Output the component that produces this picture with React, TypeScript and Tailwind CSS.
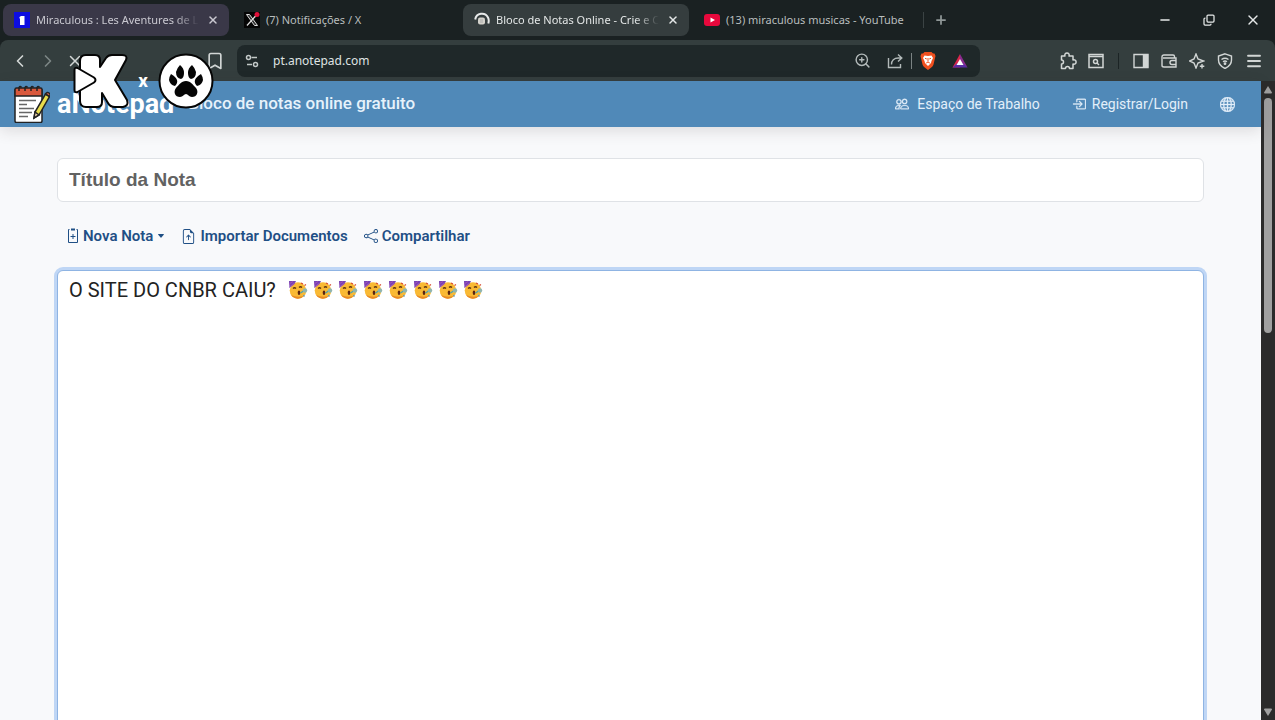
import React, { useState } from 'react';
import {
    BsPeople,
    BsBoxArrowInRight,
    BsGlobe,
    BsFileEarmarkArrowUp,
    BsShare,
    BsCaretDownFill,
} from 'react-icons/bs';
import {
    Bookmark,
    ChevronLeft,
    ChevronRight,
    Copy,
    Menu,
    Minus,
    Plus,
    X,
    ZoomIn,
} from 'lucide-react';

interface Tab {
    title: string;
    icon: React.ReactNode;
    className: string;
    closable: boolean;
}

const MiraculousIcon = () => (
    <svg viewBox="0 0 16 16" className="size-4 shrink-0">
        <rect width="16" height="16" fill="#0d0de0" />
        <path d="M5.500 5 7 4h3.500v9H6V6.500h-.5z" fill="#fff" />
    </svg>
);

const XIcon = () => (
    <svg viewBox="0 0 16 16" className="size-4 shrink-0">
        <rect width="16" height="16" fill="#050505" />
        <path d="M2.500 2.500h3l8 11h-3z" fill="#333" stroke="#ddd" />
        <path d="M12.500 3 3 13.500" stroke="#ddd" strokeWidth="1.300" />
        <circle cx="13" cy="2.500" r="2.500" fill="#e0103a" />
    </svg>
);

const LoadingIcon = () => (
    <svg viewBox="0 0 16 16" className="size-4 shrink-0">
        <path d="M1.200 7.500a6.800 6.800 0 0 1 12.800-2q1.300 2.500.3 6" fill="none" stroke="#e8eaea" strokeWidth="2" />
        <rect x="4" y="5.500" width="7" height="7" rx="2" fill="#d3d1cb" />
        <path d="M6 8h3M6 10h3" stroke="#aaa" />
    </svg>
);

const YoutubeIcon = () => (
    <svg viewBox="0 0 16 16" className="size-4 shrink-0">
        <rect y="2" width="16" height="12" rx="3" fill="#e8083c" />
        <path d="m6.500 5.500 4.500 2.500-4.500 2.500z" fill="#fff" />
    </svg>
);

const tabs: Tab[] = [
    { title: 'Miraculous : Les Aventures de La', icon: <MiraculousIcon />, className: 'bg-[#3a3848] text-[#c9c8d0]', closable: true },
    { title: '(7) Notificações / X', icon: <XIcon />, className: 'text-[#b9bebe]', closable: false },
    { title: 'Bloco de Notas Online - Crie e Co', icon: <LoadingIcon />, className: 'bg-[#353d3e] text-[#e4e7e7]', closable: true },
    { title: '(13) miraculous musicas - YouTube', icon: <YoutubeIcon />, className: 'text-[#b9bebe]', closable: false },
];

const TabStrip: React.FC = () => (
    <div className="flex h-10 shrink-0 items-center bg-[#1a2122] pl-[3px] font-['Noto_Sans',sans-serif] text-[11px]">
        <div className="flex min-w-0 flex-1 items-center gap-1">
            {tabs.map(tab => (
                <div key={tab.title} className={`flex h-8 w-[226px] min-w-0 items-center gap-1.5 rounded-lg pr-2 pl-[11px] ${tab.className}`}>
                    {tab.icon}
                    <button
                        className={`min-w-0 flex-1 text-left whitespace-nowrap ${
                            tab.closable ? '[mask-image:linear-gradient(to_right,black_85%,transparent)]' : ''
                        }`}
                    >
                        {tab.title}
                    </button>
                    {tab.closable && (
                        <button aria-label="Fechar guia" className="flex size-4 items-center justify-center">
                            <X size={12} strokeWidth={3} />
                        </button>
                    )}
                </div>
            ))}
            <div className="h-4 w-px bg-[#3b4344]" />
            <button aria-label="Nova guia" className="ml-1.5 text-[#8f9797]">
                <Plus size={14} strokeWidth={3} />
            </button>
        </div>
        <div className="flex items-center text-[#e6e9e9]">
            <button aria-label="Minimizar" className="flex w-11 justify-center"><Minus size={14} strokeWidth={2.5} /></button>
            <button aria-label="Restaurar" className="flex w-11 justify-center"><Copy size={12} strokeWidth={2.5} className="-scale-x-100 rotate-180" /></button>
            <button aria-label="Fechar" className="flex w-11 justify-center"><X size={16} strokeWidth={2} /></button>
        </div>
    </div>
);

const SiteSettingsIcon = () => (
    <svg viewBox="0 0 14 14" className="size-3.5 shrink-0" fill="none" stroke="#c3c9c8" strokeWidth="1.500">
        <circle cx="3.500" cy="3.500" r="2" />
        <path d="M6.500 3.500H12M2 10.500h5" />
        <circle cx="10.500" cy="10.500" r="2" />
    </svg>
);

const ShareOutIcon = () => (
    <svg viewBox="0 0 16 16" className="size-4" fill="none" stroke="currentColor" strokeWidth="1.400">
        <path d="M1.500 5v9.500h12V11" />
        <path d="M4.500 11.500c0-4 2.500-6.500 7-6.500h3M11 1.500 14.800 5 11 8.500" />
    </svg>
);

const BraveIcon = () => (
    <svg viewBox="0 0 16 18" className="h-[18px] w-4">
        <path d="M4.500 0h7l1.500 1.500h1.500L15.500 4 15 6l-1.500 6.500q-.5 2-2.500 3.300L8 18l-3-2.200q-2-1.300-2.500-3.300L1 6 .5 4l1-2.500H3z" fill="#f1501f" />
        <path d="M4.500 3.500 8 4l3.500-.5L13 6l-1.500 3-.5 2-3 3-3-3-.5-2L3 6z" fill="#fff" />
        <path d="m5 6.300 1.800.7M11 6.300 9.200 7M8 6v3.500M6.200 11 8 10l1.800 1" stroke="#f1501f" fill="none" />
    </svg>
);

const BatIcon = () => (
    <svg viewBox="0 0 16 16" className="size-4">
        <path d="M8 1 .5 14.500H8z" fill="#d9264c" />
        <path d="m8 1 7.500 13.500L8 9z" fill="#8b2a8e" />
        <path d="M.5 14.500h15L11 10.500H5z" fill="#5b2da6" />
        <path d="m8 6 3.500 6h-7z" fill="#fff" />
    </svg>
);

const toolbarIcons: { label: string; icon: React.ReactNode }[] = [
    {
        label: 'Barra lateral',
        icon: (
            <>
                <path d="M1 1.500h14v13H1z" />
                <path d="M10.500 2h4v12h-4z" fill="currentColor" />
            </>
        ),
    },
    {
        label: 'Carteira',
        icon: (
            <>
                <path d="M13.500 5V3.500q0-1.500-1.500-1.500H3Q1 2 1 4v8.500Q1 14 3 14h12V5H2" />
                <path d="M15 7.500h-4a2 2 0 0 0 0 4h4" />
            </>
        ),
    },
    {
        label: 'Leo IA',
        icon: (
            <>
                <path d="M7 1 9 6l5.500 2L9 10l-2 5-2-5-4.500-2L5 6z" />
                <path d="M13 11v4.500M10.800 13.200h4.500" />
            </>
        ),
    },
    {
        label: 'VPN',
        icon: (
            <>
                <path d="M8 .8 14.500 3v4q0 5.500-6.500 8.500Q1.500 12.500 1.500 7V3z" />
                <path d="M4.500 6.500q3.500-2.500 7 0M6 8.700q2-1.400 4 0" />
                <circle cx="8" cy="10.700" r=".7" fill="currentColor" />
            </>
        ),
    },
];

const Toolbar: React.FC = () => (
    <div className="shrink-0 bg-[#1a2122]">
        <div className="flex h-[41px] items-center rounded-t-lg bg-[#343e3e] pr-3 pl-2.5 text-[#d2d6d5]">
            <div className="flex w-[227px] items-center gap-2">
                <button aria-label="Voltar"><ChevronLeft size={20} strokeWidth={2} /></button>
                <button aria-label="Avançar" className="text-[#7c8685]"><ChevronRight size={20} strokeWidth={2} /></button>
                <button aria-label="Parar"><X size={18} strokeWidth={2} /></button>
                <button aria-label="Adicionar aos favoritos" className="mr-3 ml-auto"><Bookmark size={20} strokeWidth={2} /></button>
            </div>
            <div className="flex h-8 min-w-0 flex-1 items-center rounded-lg bg-[#1f2829] pr-3 pl-2">
                <SiteSettingsIcon />
                <input
                    aria-label="Endereço"
                    defaultValue="pt.anotepad.com"
                    className="ml-3.5 min-w-0 flex-1 bg-transparent font-['Noto_Sans',sans-serif] text-[12px] text-[#dfe3e3] outline-none"
                />
                <button aria-label="Zoom" className="mr-4 text-[#b3baba]"><ZoomIn size={17} strokeWidth={2} /></button>
                <button aria-label="Compartilhar página" className="text-[#b3baba]"><ShareOutIcon /></button>
                <div className="mx-2 h-4 w-px bg-[#7b8383]" />
                <button aria-label="Brave Shields" className="mr-4"><BraveIcon /></button>
                <button aria-label="Brave Rewards"><BatIcon /></button>
            </div>
            <div className="ml-20 flex items-center gap-3">
                <button aria-label="Extensões">
                    <svg viewBox="0 0 16 16" className="size-4 overflow-visible" fill="none" stroke="currentColor" strokeWidth="1.500" strokeLinejoin="round">
                        <path d="M1.500 3H5a2.200 2.200 0 1 1 4 0h4v4a2.200 2.200 0 1 1 0 4v4.500H9.500a2 2 0 0 0-4 0h-4V11a2 2 0 0 0 0-4z" />
                    </svg>
                </button>
                <button aria-label="Pesquisar guias">
                    <svg viewBox="0 0 16 16" className="size-4" fill="none" stroke="currentColor" strokeWidth="1.500">
                        <path d="M1 1.500h14v13H1zM1 3.500h14" />
                        <circle cx="7.500" cy="8.500" r="2" />
                        <path d="m9 10 2 2" />
                    </svg>
                </button>
                <div className="mx-0.5 h-4 w-px bg-[#1c2425]" />
                {toolbarIcons.map(item => (
                    <button key={item.label} aria-label={item.label}>
                        <svg viewBox="0 0 16 16" className="size-4" fill="none" stroke="currentColor" strokeWidth="1.400">
                            {item.icon}
                        </svg>
                    </button>
                ))}
                <button aria-label="Menu"><Menu size={18} strokeWidth={2.5} /></button>
            </div>
        </div>
    </div>
);

const NotepadLogo = () => (
    <svg viewBox="0 0 36 38" className="h-[38px] w-9 shrink-0" stroke="#222" strokeWidth="1.500">
        <path d="M1 5h27v31q0 1.500-1.500 1.500h-24Q1 37.500 1 36z" fill="#fff" />
        <path d="M1 4.500q0-1.500 1.500-1.500h24Q28 3 28 4.500V11H1z" fill="#d9583c" />
        <path d="M5 6V2.500q1-2 2.500 0M11 6V2.500q1-2 2.500 0M17 6V2.500q1-2 2.500 0M23 6V2.500q1-2 2.500 0" fill="none" />
        <path d="M5 15.500h17M5 19.500h8M5 23.500h15M5 27.500h13M5 31.500h9" fill="none" stroke="#666" />
        <path d="m20 33 1-6L31.500 9l4 2.500L25 30z" fill="#e8dc4c" />
        <path d="M31.500 9q1.500-2.500 3.500-1t.5 3.500z" fill="#e06a50" />
        <path d="m20 33 1-6 4 3z" fill="#f5d9b0" />
    </svg>
);

const SiteHeader: React.FC = () => (
    <header className="relative z-10 flex h-[46px] shrink-0 items-center bg-[#5089b8] pr-[26px] pl-3.5 font-['Roboto',sans-serif] text-white shadow-[0_4px_14px_rgba(60,40,40,0.14)]">
        <NotepadLogo />
        <a href="#" className="ml-[7px] flex items-center whitespace-nowrap">
            <span className="text-[27px] leading-[30px] font-bold">aNotepad</span>
            <span className="ml-1 text-[17px] font-medium text-[#e6f2fb]">- Bloco de notas online gratuito</span>
        </a>
        <nav className="ml-auto flex items-center text-[14px] text-[#e3effa]">
            <a href="#" className="flex items-center gap-2"><BsPeople size={14} strokeWidth={0.4} />Espaço de Trabalho</a>
            <a href="#" className="ml-8 flex items-center gap-1.5"><BsBoxArrowInRight size={14} strokeWidth={0.4} />Registrar/Login</a>
            <button aria-label="Idioma" className="ml-8"><BsGlobe size={15} strokeWidth={0.4} /></button>
        </nav>
    </header>
);

const NewNoteIcon = () => (
    <svg viewBox="0 0 12 16" className="h-4 w-3" fill="none" stroke="currentColor">
        <path d="M2.500 1.500h-1v13h9v-13h-1" />
        <path d="M4 1.500h4" strokeWidth="2" />
        <path d="M6 6v5M3.500 8.500h5" />
    </svg>
);

const PartyFace = () => (
    <svg viewBox="0 0 20 20" className="size-5">
        <circle cx="10" cy="10.500" r="8.300" fill="#f9b934" />
        <path d="M3 15a8.300 8.300 0 0 0 13 1q-7 2-13-1z" fill="#e88a26" />
        <path d="M1 1h7l-1.500 3L1.500 8z" fill="#7544b5" />
        <path d="m1 4 4-2.500M1.500 7 6.500 3" stroke="#a552b8" />
        <path d="M5 8.500q1.500-1.500 3 0M11 7.500q1.500-1.500 3 0" fill="none" stroke="#5b3413" strokeWidth="1.300" />
        <ellipse cx="11" cy="12.800" rx="1.300" ry="2.200" fill="#5b2410" />
        <path d="m12.500 13 3-2" stroke="#45a2b5" strokeWidth="1.300" />
        <circle cx="17" cy="10.500" r="2.200" fill="#8fb5b0" />
        <path d="m15.500 15 1 1.500" stroke="#4e94c9" strokeWidth="1.300" />
        <path d="m13 3 2 1M16.500 5.500l1.500-1" stroke="#d6472e" strokeWidth="1.200" />
    </svg>
);

const Editor: React.FC = () => {
    const [title, setTitle] = useState('');
    const [text, setText] = useState('O SITE DO CNBR CAIU?');

    return (
        <main className="min-h-0 flex-1 overflow-hidden bg-[#f8f9fb] px-[57px] pt-[31px]">
            <input
                aria-label="Título da Nota"
                placeholder="Título da Nota"
                value={title}
                onChange={e => setTitle(e.target.value)}
                className="h-11 w-full rounded-md border border-[#dfe2e6] bg-white px-[11px] font-['Liberation_Sans',sans-serif] text-[19px] font-bold outline-none placeholder:text-[#626262]"
            />
            <div className="flex h-[68px] items-center gap-4 pl-2.5 font-['Roboto',sans-serif] text-[15px] font-semibold text-[#1f4f85]">
                <button className="flex items-center gap-1"><NewNoteIcon />Nova Nota<BsCaretDownFill size={8} /></button>
                <button className="flex items-center gap-1"><BsFileEarmarkArrowUp size={15} />Importar Documentos</button>
                <button className="flex items-center gap-1"><BsShare size={14} />Compartilhar</button>
            </div>
            <div className="relative">
                <textarea
                    aria-label="Nota"
                    rows={20}
                    value={text}
                    onChange={e => setText(e.target.value)}
                    className="block w-full resize-none rounded-md border border-[#8fb4e3] bg-white px-[11px] py-1 font-['Roboto',sans-serif] text-[20px] leading-[30px] text-[#222] ring-3 ring-[#bfd6f5] outline-none"
                />
                <div aria-hidden="true" className="pointer-events-none absolute top-2.5 left-[231px] flex gap-[5px]">
                    {Array.from({ length: 8 }, (_, i) => <PartyFace key={i} />)}
                </div>
            </div>
        </main>
    );
};

const Scrollbar: React.FC = () => (
    <div aria-hidden="true" className="flex w-3.5 shrink-0 flex-col items-center bg-[#2b2b2b]">
        <svg viewBox="0 0 14 17" className="h-[17px] w-3.5"><path d="m7 5 4 6.500q0 1-1 1H4q-1 0-1-1z" fill="#a0a0a0" /></svg>
        <div className="h-[235px] w-2 rounded-full bg-[#a0a0a0]" />
        <svg viewBox="0 0 14 17" className="mt-auto h-[17px] w-3.5"><path d="m7 13 4-6.500q0-1-1-1H4q-1 0-1 1z" fill="#a0a0a0" /></svg>
    </div>
);

const Watermark: React.FC = () => (
    <div className="pointer-events-none absolute top-[53px] left-[72px] z-20 flex items-center">
        <svg viewBox="0 0 58 56" className="h-14 w-[58px]" fill="#fff" stroke="#050505" strokeWidth="2" strokeLinejoin="round">
            <path d="M14 2h9q5 0 5 5v7l6-9q2-3 6-3h10q6 0 4 5L43 27l12 20q2 6-4 7h-8q-5 0-7-4l-6-10v9q0 5-5 5H14q-6 0-6-6V8q0-6 6-6z" />
            <path d="M2.500 17q0-3 3-2L22 24.500q3 2.500 0 5L5.500 39q-3 1-3-2z" />
        </svg>
        <span className="w-[26px] text-center font-['Roboto',sans-serif] text-[19px] leading-4 font-bold text-white">x</span>
        <svg viewBox="0 0 56 56" className="ml-0.5 size-14">
            <circle cx="28" cy="28" r="26.500" fill="#fff" stroke="#050505" strokeWidth="2" />
            <g fill="#050505">
                <path d="M28 28c5 0 7 4 10 7 3 4 1 9-4 9-3 0-4-3-6-3s-3 3-6 3c-5 0-7-5-4-9 3-3 5-7 10-7z" />
                <path d="M22 12q4 3 4 8t-3 6q-5-1-5-7 1-4 4-7zM34 12q-4 3-4 8t3 6q5-1 5-7-1-4-4-7zM13 21q5 3 6 6t-2 6q-5-1-6-6 0-3 2-6zM43 21q-5 3-6 6t2 6q5-1 6-6 0-3-2-6z" />
            </g>
        </svg>
    </div>
);

const App: React.FC = () => (
    <div className="relative flex h-screen flex-col overflow-hidden">
        <TabStrip />
        <Toolbar />
        <div className="flex min-h-0 flex-1">
            <div className="flex min-w-0 flex-1 flex-col">
                <SiteHeader />
                <Editor />
            </div>
            <Scrollbar />
        </div>
        <Watermark />
    </div>
);

export default App;
